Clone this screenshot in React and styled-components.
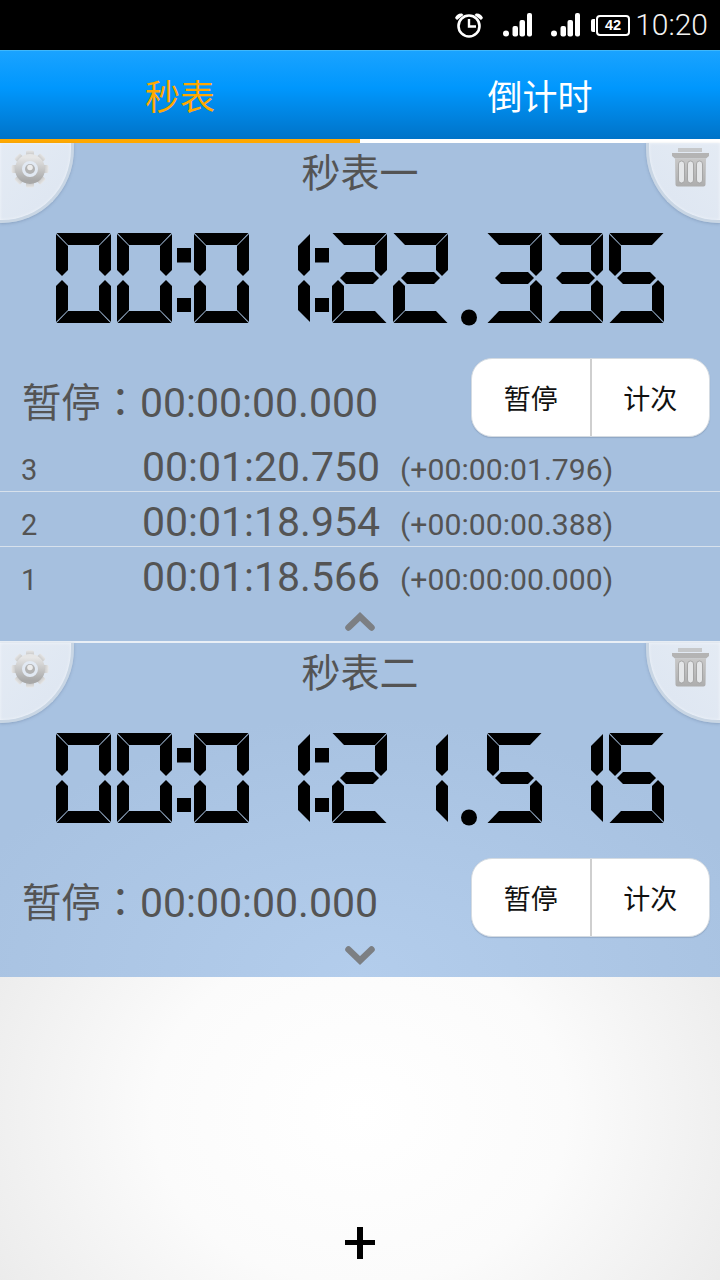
import React from "react";
import styled, { createGlobalStyle } from "styled-components";

const Global = createGlobalStyle`
  html, body { margin: 0; padding: 0; background: #000; }
  body { width: 720px; height: 1280px; overflow: hidden; font-family: "Roboto", "Noto Sans CJK SC", sans-serif; }
`;
const CJK = `"Noto Sans CJK SC", "Noto Sans", sans-serif`;
const NUM = `"Roboto", "Noto Sans CJK SC", sans-serif`;

const Screen = styled.div`
  width: 720px; height: 1280px; display: flex; flex-direction: column; overflow: hidden;
`;
const StatusBar = styled.div`
  height: 50px; flex: none; background: #000; display: flex; align-items: center; justify-content: flex-end;
  padding-right: 12px; box-sizing: border-box; color: #f2f2f2;
`;
const Clock = styled.span`
  font: 300 30px/50px ${NUM}; margin-left: 5px;
`;
const Tabs = styled.div`
  height: 89px; flex: none; display: flex;
  background: linear-gradient(#1aa3ff 0%, #0097fd 42%, #0073c8 100%);
  border-top: 1px solid #3fb8fb; box-sizing: border-box;
`;
const Tab = styled.div`
  flex: 1; text-align: center; font: 400 35px/87px ${CJK};
  color: ${p => (p.$active ? "#ffa800" : "#fff")};
`;
const Underline = styled.div`
  height: 4px; flex: none; display: flex; background: #fff;
`;
const UnderlineActive = styled.div`width: 360px; background: #ffa800;`;
const Panel = styled.section`
  position: relative; flex: none; height: ${p => p.$h}px; box-sizing: border-box;
  background: ${p => p.$glow
    ? "radial-gradient(ellipse 420px 260px at 50% 100%, #b3cdec 0%, #a8c2e1 100%)"
    : "#a6c0df"};
  border-bottom: ${p => (p.$rule ? "2px solid #e9eff6" : "none")};
`;
const Corner = styled.div`
  position: absolute; top: 0; ${p => p.$side}: 0; width: 74px; height: 80px; box-sizing: border-box;
  background: linear-gradient(${p => (p.$side === "left" ? "135deg" : "225deg")}, #e4ebf4 0%, #dfe7f2 70%, #d3dde9 100%);
  border-bottom: 3px solid #c9d6e4;
  border-${p => (p.$side === "left" ? "right" : "left")}: 3px solid #c9d6e4;
  border-bottom-${p => (p.$side === "left" ? "right" : "left")}-radius: 72px 74px;
  box-shadow: 0 1px 3px rgba(90,110,140,.35), inset 0 0 3px #f4f7fb;
  display: flex; padding-top: ${p => (p.$side === "left" ? 7 : 5)}px;
  justify-content: ${p => (p.$side === "left" ? "flex-start" : "flex-end")};
  padding-${p => p.$side}: 11px;
`;
const Title = styled.h2`
  margin: 0; height: 59px; text-align: center; font: 400 39px/55px ${CJK}; color: #545454;
`;
const Display = styled.div`
  height: 91px; display: flex; padding-left: 56px; margin-top: 31px;
`;
const PauseRow = styled.div`
  display: flex; justify-content: space-between; margin-top: 34px; height: 80px; padding: 0 10px 0 22px;
`;
const PauseText = styled.div`
  font: 400 41px/83px ${NUM}; color: #545454; white-space: nowrap;
`;
const PauseLabel = styled.span`
  font: 400 39.34px/83px "Noto Sans CJK TC", ${CJK};
`;
const BtnGroup = styled.div`
  width: 239px; height: 79px; display: flex; background: #fff; border-radius: 21px;
  border: 1px solid #d4dbe2; box-sizing: border-box;
  box-shadow: 0 1px 1px rgba(90,110,140,.3);
`;
const Btn = styled.div`
  flex: 1; text-align: center; font: 400 27px/78px ${CJK}; color: #111;
  & + & { border-left: 2px solid #cfcfcf; }
`;
const Laps = styled.div`margin-top: -1px;`;
const LapRow = styled.div`
  height: 48px; padding-top: 6px; display: flex; align-items: center; color: #545454;
  border-bottom: ${p => (p.$rule ? "1px solid #d7e1ec" : "none")};
`;
const LapIndex = styled.span`width: 142px; margin-top: 6px; padding-left: 21px; box-sizing: border-box; font: 400 29px/48px ${NUM};`;
const LapTime = styled.span`width: 258px; font: 400 41px/48px ${NUM}; white-space: nowrap;`;
const LapDiff = styled.span`margin-top: 6px; font: 400 30.2px/48px ${NUM}; white-space: nowrap;`;
const Chevron = styled.div`
  display: flex; justify-content: center; height: 20px; margin-top: ${p => p.$gap}px;
`;
const Empty = styled.div`
  flex: 1; display: flex; align-items: flex-end; justify-content: center;
  background: radial-gradient(ellipse 460px 380px at 50% 45%, #ffffff 0%, #fbfbfb 45%, #e8e8e8 100%);
`;
const Plus = styled.svg`margin-bottom: 21px; flex: none;`;

const SEG = {
  a: "0.5,0 54.5,0 43,12 12,12",
  f: "0,1 12,13 12,37 6,43 0,37",
  b: "55,1 43,13 43,37 49,43 55,37",
  g: "8,45 14,39 41,39 47,45 41,51 14,51",
  e: "6,47 12,53 12,77 0,89 0,53",
  c: "49,47 55,53 55,89 43,77 43,53",
  d: "0.5,90 12,78 43,78 54.5,90",
};
const MAP = {
  0: "abcdef", 1: "bc", 2: "abged", 3: "abgcd", 5: "afgcd",
};
const DigitSvg = styled.svg`flex: none; margin-right: ${p => p.$mr}px;`;
const Digit = ({ v, mr }) => (
  <DigitSvg $mr={mr} width="55" height="90" viewBox="0 0 55 90">
    {MAP[v].split("").map(s => <polygon key={s} points={SEG[s]} fill="#000" />)}
  </DigitSvg>
);
const Colon = () => (
  <DigitSvg $mr={3} width="14" height="90" viewBox="0 0 14 90">
    <rect x="0" y="15" width="14" height="14.500" fill="#000" />
    <rect x="0" y="65" width="14" height="14" fill="#000" />
  </DigitSvg>
);
const Dot = () => (
  <DigitSvg $mr={10} width="16" height="94" viewBox="0 0 16 94">
    <circle cx="8" cy="84.5" r="8" fill="#000" />
  </DigitSvg>
);
const Lcd = ({ t }) => (
  <Display>
    <Digit v={t[0]} mr={6} /><Digit v={t[1]} mr={5} /><Colon />
    <Digit v={t[2]} mr={6} /><Digit v={t[3]} mr={5} /><Colon />
    <Digit v={t[4]} mr={6} /><Digit v={t[5]} mr={13} /><Dot />
    <Digit v={t[6]} mr={6} /><Digit v={t[7]} mr={6} /><Digit v={t[8]} mr={0} />
  </Display>
);

const Gear = () => {
  const teeth = [0, 45, 90, 135, 180, 225, 270, 315];
  return (
    <svg width="38" height="38" viewBox="0 0 38 38">
      <defs>
        <linearGradient id="gr" x1="0" y1="0" x2="0" y2="1">
          <stop offset="0" stopColor="#e6e6e6" /><stop offset="1" stopColor="#a8a8a8" />
        </linearGradient>
      </defs>
      {teeth.map(a => <rect key={a} x="15" y="0.500" width="8" height="9" rx="1.5" fill="url(#gr)" transform={`rotate(${a} 19 19)`} />)}
      <circle cx="19" cy="19" r="11.5" fill="none" stroke="url(#gr)" strokeWidth="7" />
      <circle cx="19" cy="19" r="5" fill="#b3b3b3" />
      <circle cx="19" cy="17.5" r="2.8" fill="#ececec" />
    </svg>
  );
};
const Trash = () => (
  <svg width="37" height="39" viewBox="0 0 37 39">
    <defs>
      <linearGradient id="tr" x1="0" y1="0" x2="0" y2="1">
        <stop offset="0" stopColor="#c8c8c8" /><stop offset="1" stopColor="#adadad" />
      </linearGradient>
    </defs>
    <rect x="6" y="0" width="24" height="4" fill="#c6c8ca" />
    <path d="M0 5H37V8L34 10.500H3L0 8Z" fill="#b4b4b4" />
    <path d="M3 10.500H34L33.500 36.500Q33.500 38.500 31.500 38.500H5.500Q3.500 38.500 3.500 36.500Z" fill="url(#tr)" />
    <rect x="6.5" y="13" width="6" height="22" rx="3" fill="#e4e6e8" stroke="#9a9a9a" strokeWidth=".8" />
    <rect x="15.500" y="13" width="6" height="22" rx="3" fill="#e4e6e8" stroke="#9a9a9a" strokeWidth=".8" />
    <rect x="24.500" y="13" width="6" height="22" rx="3" fill="#e4e6e8" stroke="#9a9a9a" strokeWidth=".8" />
  </svg>
);
const Chev = ({ up }) => (
  <svg width="32" height="20" viewBox="0 0 32 20">
    <path d={up ? "M4.5 15.5L16 4.500L27.5 15.5" : "M4.5 4.5L16 15.500L27.5 4.5"} fill="none" stroke="#7c7f83" strokeWidth="6.5" strokeLinecap="round" strokeLinejoin="miter" />
  </svg>
);
const SignalSvg = styled.svg`margin-left: 19px; flex: none;`;
const Signal = () => (
  <SignalSvg width="29" height="24" viewBox="0 0 29 24">
    <circle cx="3" cy="20.500" r="3" fill="#fff" />
    <rect x="9.500" y="13" width="5.5" height="10.500" rx="2" fill="#fff" />
    <rect x="16.500" y="7" width="5.5" height="16.500" rx="2" fill="#fff" />
    <rect x="24" y="0" width="5" height="23.500" rx="2" fill="#fff" />
  </SignalSvg>
);
const AlarmSvg = styled.svg`flex: none;`;
const Alarm = () => (
  <AlarmSvg width="30" height="26" viewBox="0 0 30 26">
    <circle cx="15" cy="14" r="10.5" fill="none" stroke="#fff" strokeWidth="2.6" />
    <path d="M15 7V14.5H22" fill="none" stroke="#fff" strokeWidth="2.4" />
    <path d="M1 6Q3 1 8 1.5L9.5 3L3 8Z M29 6Q27 1 22 1.5L20.5 3L27 8Z" fill="#fff" />
  </AlarmSvg>
);
const BatteryBox = styled.div`
  position: relative; width: 34px; height: 21px; margin-left: 16px; border: 2.5px solid #fff; border-radius: 4px;
  box-sizing: border-box; font: 700 14.5px/16px "Liberation Sans", sans-serif; color: #fff; text-align: center;
  &::before { content: ""; position: absolute; left: -7px; top: 2px; width: 4px; height: 13px; background: #fff; border-radius: 2px 0 0 2px; }
`;

const Stopwatch = ({ name, t, laps, h, glow, rule, up }) => (
  <Panel $h={h} $glow={glow} $rule={rule}>
    <Corner $side="left"><Gear /></Corner>
    <Corner $side="right"><Trash /></Corner>
    <Title>{name}</Title>
    <Lcd t={t} />
    <PauseRow>
      <PauseText><PauseLabel>暂停：</PauseLabel>00:00:00.000</PauseText>
      <BtnGroup><Btn>暂停</Btn><Btn>计次</Btn></BtnGroup>
    </PauseRow>
    {laps && (
      <Laps>
        {laps.map((l, i) => (
          <LapRow key={l[0]} $rule={i < laps.length - 1}>
            <LapIndex>{l[0]}</LapIndex><LapTime>{l[1]}</LapTime><LapDiff>{l[2]}</LapDiff>
          </LapRow>
        ))}
      </Laps>
    )}
    <Chevron $gap={laps ? 11 : 7}><Chev up={up} /></Chevron>
  </Panel>
);

export default function App() {
  return (
    <Screen>
      <Global />
      <StatusBar>
        <Alarm /><Signal /><Signal />
        <BatteryBox>42</BatteryBox>
        <Clock>10:20</Clock>
      </StatusBar>
      <Tabs><Tab $active>秒表</Tab><Tab>倒计时</Tab></Tabs>
      <Underline><UnderlineActive /></Underline>
      <Stopwatch name="秒表一" t={[0, 0, 0, 1, 2, 2, 3, 3, 5]} h={500} rule up
        laps={[["3", "00:01:20.750", "(+00:00:01.796)"], ["2", "00:01:18.954", "(+00:00:00.388)"], ["1", "00:01:18.566", "(+00:00:00.000)"]]} />
      <Stopwatch name="秒表二" t={[0, 0, 0, 1, 2, 1, 5, 1, 5]} h={334} glow />
      <Empty>
        <Plus width="30" height="32" viewBox="0 0 30 32"><path d="M12 0H18V13H30V18H18V32H12V18H0V13H12Z" fill="#000" /></Plus>
      </Empty>
    </Screen>
  );
}
